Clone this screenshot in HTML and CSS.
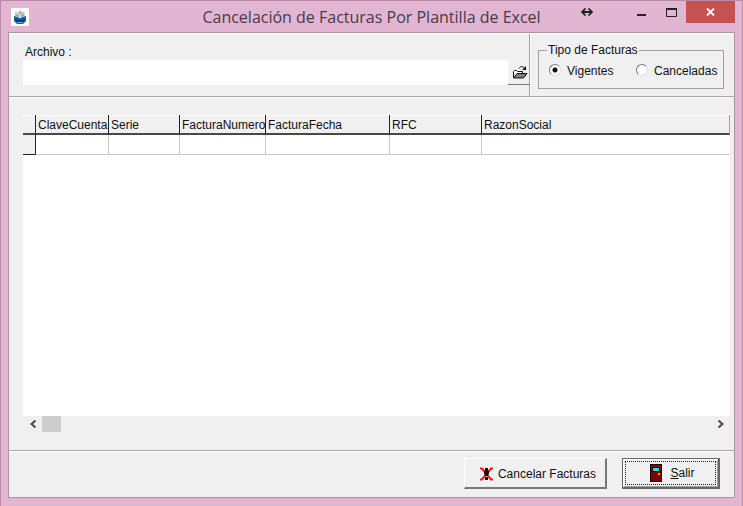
FILE: index.html
```html
<!DOCTYPE html>
<html lang="es">
<head>
<meta charset="utf-8">
<title>Cancelación de Facturas Por Plantilla de Excel</title>
<link rel="stylesheet" href="styles.css">
</head>
<body>
<div class="window">
  <header class="titlebar">
    <svg class="app-icon" viewBox="0 0 18 18" aria-hidden="true">
      <rect width="18" height="18" fill="#fff"/>
      <path d="M4 3l3 1 2-2 2 2 3-1v6H4z" fill="#c9dbe6"/>
      <path d="M3 8l3 1 3 1 3-1 3-1v5l-3 3H6l-3-3z" fill="#1c5c9c"/>
      <path d="M4 11l5 1 5-1-1 3H5z" fill="#0c3f7c"/>
      <path d="M5 6l3 1v2L4 8zM13 5l-3 2v2l3-1z" fill="#7fb0d2"/>
      <path d="M8 4l2-1 1 2-2 2z" fill="#f0924c"/>
      <path d="M6 14h6v1H6z" fill="#75a9d0"/>
    </svg>
    <h1 class="title">Cancelación de Facturas Por Plantilla de Excel</h1>
    <div class="controls">
      <button class="control move" type="button" aria-label="Mover">
        <svg width="12" height="8" viewBox="0 0 12 8"><path d="M2 4h8" stroke="#222" stroke-width="2"/><path d="M4.500 .5L1 4l3.500 3.500M7.500 .5L11 4 7.500 7.500" fill="none" stroke="#222" stroke-width="1.700"/></svg>
      </button>
      <button class="control" type="button" aria-label="Minimizar">
        <svg width="11" height="9" viewBox="0 0 11 9"><path d="M1 6h9v2H1z" fill="#222"/></svg>
      </button>
      <button class="control" type="button" aria-label="Maximizar">
        <svg width="11" height="9" viewBox="0 0 11 9"><path d="M.5 1v7.500h10V1" fill="none" stroke="#222"/><path d="M0 0h11v2H0z" fill="#222"/></svg>
      </button>
      <button class="control close" type="button" aria-label="Cerrar">
        <svg width="9" height="8" viewBox="0 0 9 8"><path d="M1 .5l7 7M8 .5l-7 7" stroke="#fff" stroke-width="1.800"/></svg>
      </button>
    </div>
  </header>

  <main class="client">
    <section class="top">
      <div class="file">
        <label for="archivo">Archivo :</label>
        <div class="file-row">
          <input class="file-input" id="archivo" type="text">
          <button class="open" type="button" aria-label="Abrir">
            <svg width="16" height="15" viewBox="0 0 16 15">
              <path d="M1.500 12.500v-6l1-1h2l1 1h5v2" fill="#fff" stroke="#111"/>
              <path d="M1.500 13l3.500-4.500h10L11.500 13z" fill="#808078" stroke="#111"/>
              <path d="M7 3.500c1.500-2.500 4-2.500 5.500-.5" fill="none" stroke="#111"/>
              <path d="M14 1v4h-4z" fill="#111"/>
            </svg>
          </button>
        </div>
      </div>
      <div class="type">
        <fieldset class="group">
          <legend>Tipo de Facturas</legend>
          <label class="option"><input type="radio" name="tipo" checked>Vigentes</label>
          <label class="option"><input type="radio" name="tipo">Canceladas</label>
        </fieldset>
      </div>
    </section>

    <section class="middle">
      <div class="grid-area">
        <table class="grid">
          <colgroup>
            <col class="c-mark"><col class="c-clave"><col class="c-serie"><col class="c-numero"><col class="c-fecha"><col class="c-rfc"><col>
          </colgroup>
          <thead>
            <tr><th></th><th>ClaveCuenta</th><th>Serie</th><th>FacturaNumero</th><th>FacturaFecha</th><th>RFC</th><th>RazonSocial</th></tr>
          </thead>
          <tbody>
            <tr><th></th><td></td><td></td><td></td><td></td><td></td><td></td></tr>
          </tbody>
        </table>
      </div>
      <div class="scrollbar">
        <button class="arrow" type="button" aria-label="Izquierda"><svg width="8" height="8" viewBox="0 0 8 8"><path d="M6.500 .5L2.500 4l4 3.500" fill="none" stroke="#484848" stroke-width="2"/></svg></button>
        <div class="track"><div class="thumb"></div></div>
        <button class="arrow" type="button" aria-label="Derecha"><svg width="8" height="8" viewBox="0 0 8 8"><path d="M1.500 .5l4 3.500-4 3.500" fill="none" stroke="#484848" stroke-width="2"/></svg></button>
      </div>
    </section>

    <footer class="bottom">
      <button class="push" type="button">
        <svg width="15" height="14" viewBox="0 0 15 14">
          <path d="M1 1.500h2l9 11h2M14 1.500h-2l-9 11H1" fill="none" stroke="#f81414" stroke-width="2"/>
          <path d="M6 1h3v3h1v3L9 8v1H6V8L5 7V4h1zM6 10h3v3H6z" fill="#111"/>
        </svg>
        <span>Cancelar Facturas</span>
      </button>
      <button class="push default" type="button">
        <span class="focus">
          <svg width="12" height="18" viewBox="0 0 12 18">
            <rect x=".5" y=".5" width="11" height="17" fill="#800000" stroke="#1a0000"/>
            <rect x="2.500" y="3.500" width="7" height="4" fill="#20dce8" stroke="#300"/>
            <rect x="8" y="9" width="2" height="2" fill="#e0b000"/>
          </svg>
          <span><u>S</u>alir</span>
        </span>
      </button>
    </footer>
  </main>
</div>
</body>
</html>
```
FILE: styles.css
```css
* {
  box-sizing: border-box;
}

body {
  margin: 0;
  font: 12px/16px "Liberation Sans", Arial, sans-serif;
  color: #111;
}

button,
input {
  margin: 0;
  padding: 0;
  border: 0;
  border-radius: 0;
  font: inherit;
  color: inherit;
}

button {
  display: flex;
  align-items: center;
  justify-content: center;
  background: none;
}

svg {
  display: block;
  flex: none;
}

.window {
  display: flex;
  flex-direction: column;
  min-height: 100vh;
  padding: 0 7px 8px;
  border: 1px solid #b58ba8;
  border-width: 1px 1px 0;
  background: #e2b5d2;
}

/* Title bar */
.titlebar {
  display: grid;
  grid-template-columns: 1fr auto 1fr;
  align-items: center;
  height: 31px;
}

.app-icon {
  width: 18px;
  height: 18px;
  margin-left: 3px;
}

.title {
  margin: 0;
  font: 400 16px/24px "Open Sans", "Noto Sans", sans-serif;
  color: #433c4a;
  white-space: nowrap;
}

.controls {
  display: flex;
  align-self: start;
  justify-content: flex-end;
}

.control {
  width: 30px;
  height: 22px;
}

.move {
  margin-right: 24px;
}

.close {
  width: 49px;
  background: #c75050;
}

/* Client area */
.client {
  display: flex;
  flex: 1;
  flex-direction: column;
  border: 1px solid #aa94a4;
  background: #f0f0f0;
}

.top {
  display: flex;
  height: 64px;
  border-top: 1px solid #fff;
  border-bottom: 1px solid #a8a8a8;
}

.file {
  flex: 1;
  padding: 10px 0 0 14px;
}

.file label {
  display: block;
  padding-left: 2px;
}

.file-row {
  display: flex;
  height: 25px;
}

.file-input {
  flex: 1;
  min-width: 0;
  padding: 0 4px;
  background: #fff;
}

.open {
  width: 21px;
  padding-left: 2px;
  border-bottom: 1px solid #777;
}

.type {
  padding: 8px 10px 0 8px;
  border-left: 1px solid #a0a0a0;
  box-shadow: inset 1px 0 #fff;
}

.group {
  display: flex;
  width: 185px;
  height: 47px;
  margin: 0;
  padding: 5px 0 0 10px;
  border: 1px solid #a0a0a0;
}

.group legend {
  margin-left: -2px;
  padding: 0 1px;
}

.option {
  display: flex;
  align-items: flex-start;
  width: 87px;
  gap: 6px;
  white-space: nowrap;
}

.option input {
  appearance: none;
  flex: none;
  width: 12px;
  height: 12px;
  margin-top: 1px;
  border: 1px solid;
  border-color: #777 #ddd #ddd #777;
  border-radius: 50%;
  background: #fff;
}

.option input:checked {
  background: radial-gradient(circle, #111 2px, #fff 3px);
}

/* Data grid */
.middle {
  display: flex;
  flex: 1;
  flex-direction: column;
  padding: 17px 4px 18px 14px;
  border-top: 1px solid #fff;
  border-bottom: 1px solid #a8a8a8;
}

.grid-area {
  flex: 1;
  background: #fff;
}

.grid {
  width: 100%;
  table-layout: fixed;
  border-collapse: separate;
  border-spacing: 0;
}

.c-mark { width: 13px; }
.c-clave { width: 73px; }
.c-serie { width: 71px; }
.c-numero { width: 86px; }
.c-fecha { width: 124px; }
.c-rfc { width: 92px; }

.grid th,
.grid td {
  height: 20px;
  padding: 0 0 0 2px;
  border: solid #c8c8c8;
  border-width: 0 1px 1px 0;
  font-weight: 400;
  text-align: left;
  white-space: nowrap;
}

.grid th {
  border-color: #222;
  background: #f0f0f0;
}

.grid thead th {
  padding-top: 1px;
  border-bottom: 2px solid #484848;
  box-shadow: inset 0 1px #fff;
}

.grid thead th:last-child {
  border-right-color: #a0a0a0;
}

.grid td:last-child {
  border-right: 0;
}

.scrollbar {
  display: flex;
  height: 16px;
}

.arrow {
  width: 19px;
}

.track {
  flex: 1;
}

.thumb {
  width: 19px;
  height: 16px;
  background: #cdcdcd;
}

/* Buttons */
.bottom {
  display: flex;
  justify-content: flex-end;
  gap: 15px;
  padding: 6px 14px 8px;
  border-top: 1px solid #fff;
}

.push {
  height: 31px;
  padding: 2px 9px 0 14px;
  gap: 4px;
  border: solid;
  border-width: 1px 2px 2px 1px;
  border-color: #fff #777 #777 #fff;
}

.default {
  padding: 2px;
  border: 2px solid #666;
  border-width: 1px 2px 2px 1px;
  box-shadow: inset 1px 1px #fff, inset -1px -1px #a0a0a0;
}

.focus {
  display: flex;
  align-items: center;
  justify-content: center;
  width: 91px;
  height: 24px;
  padding-left: 4px;
  gap: 8px;
  border: 1px dotted #222;
}
```
